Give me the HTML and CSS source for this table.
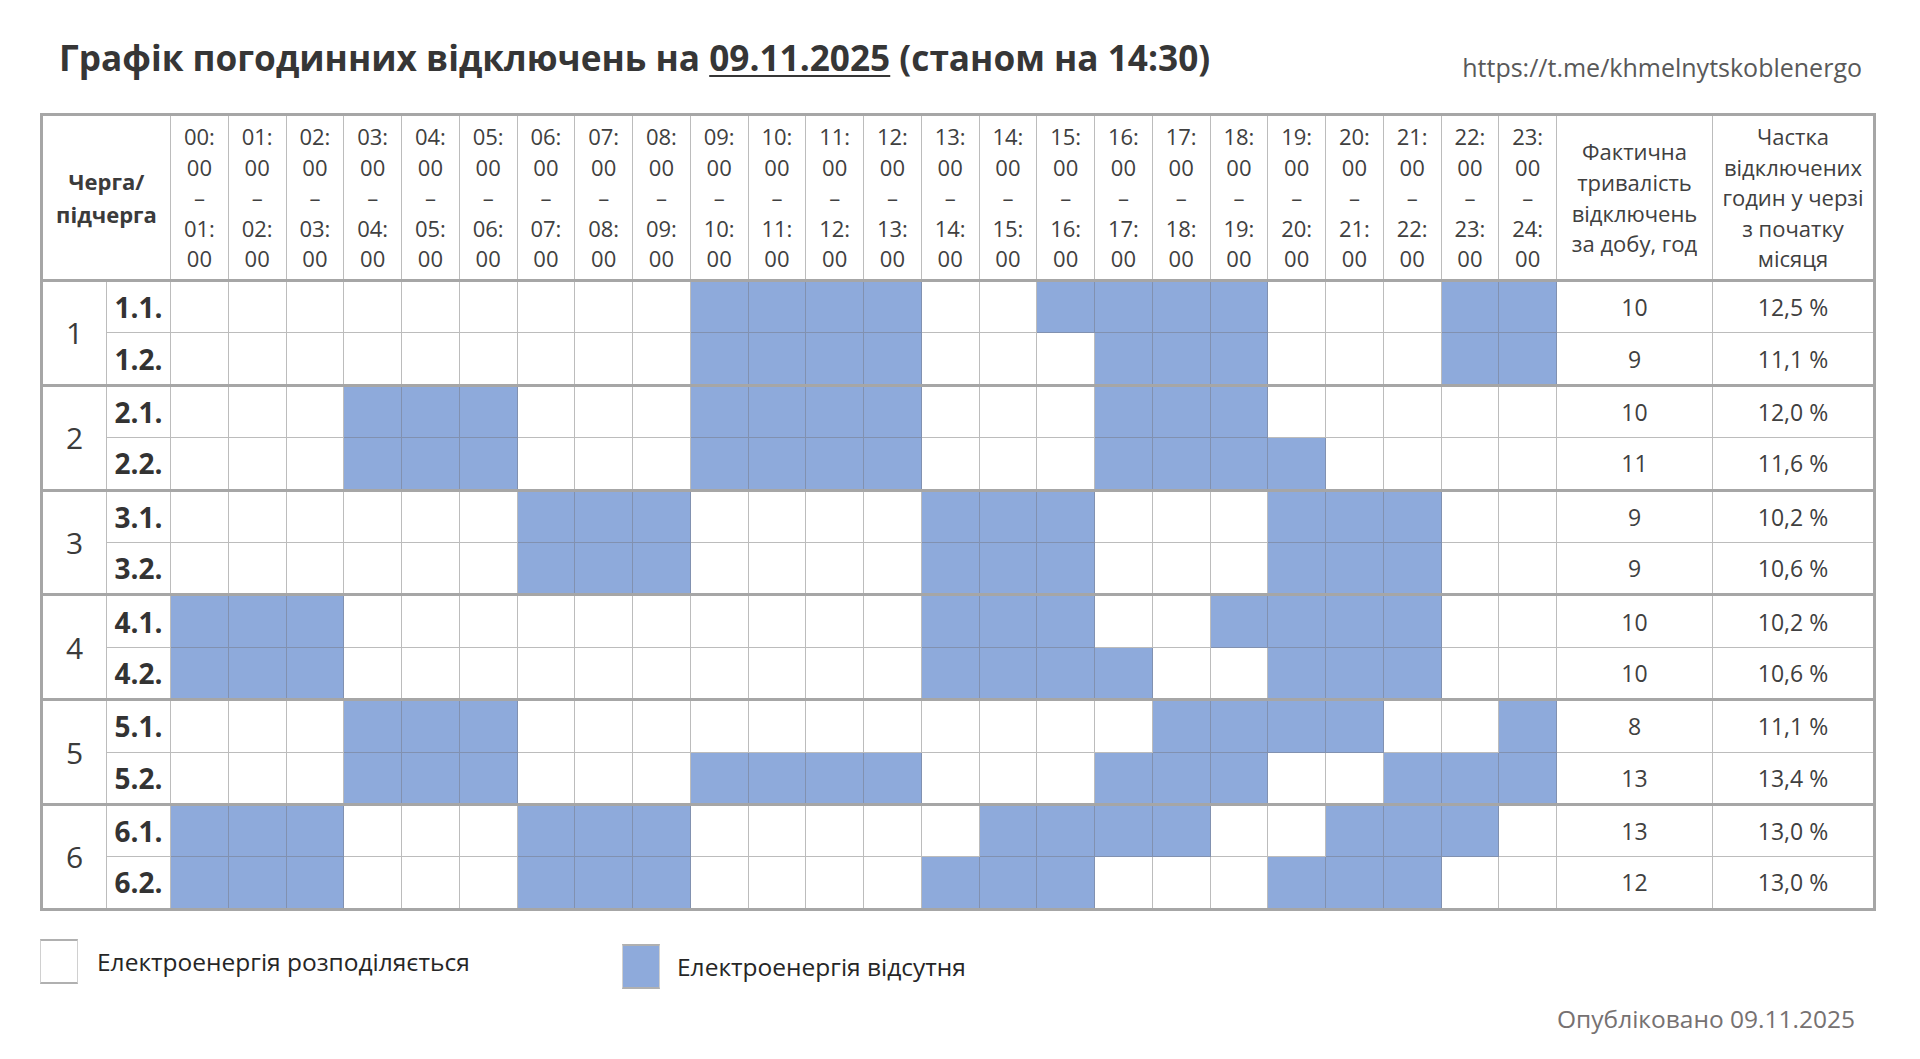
FILE: index.html
```html
<!DOCTYPE html>
<html>
<head>
    <meta charset="UTF-8">
    <title>Графік погодинних відключень</title>
    <link rel="stylesheet" href="styles.css">
</head>
<body>
    <div class="page">
        <div class="top">
            <h1 class="title">Графік погодинних відключень на <u>09.11.2025</u> (станом на 14:30)</h1>
            <div class="link">https://t.me/khmelnytskoblenergo</div>
        </div>

        <table class="schedule">
            <colgroup>
                <col class="c-group">
                <col class="c-sub">
            </colgroup>
            <thead>
                <tr id="headRow">
                    <th colspan="2" class="queue-head">Черга/<br>підчерга</th>
                </tr>
            </thead>
            <tbody id="scheduleBody"></tbody>
        </table>

        <div class="legend">
            <div class="legend-item">
                <span class="legend-box"></span>
                <span>Електроенергія розподіляється</span>
            </div>
            <div class="legend-item second">
                <span class="legend-box off"></span>
                <span>Електроенергія відсутня</span>
            </div>
        </div>

        <div class="published">Опубліковано 09.11.2025</div>
    </div>

    <script>
        // черга, підчерга, години без світла, тривалість, частка
        const rows = [
            ['1', '1.1.', [9, 10, 11, 12, 15, 16, 17, 18, 22, 23], '10', '12,5 %'],
            ['1', '1.2.', [9, 10, 11, 12, 16, 17, 18, 22, 23], '9', '11,1 %'],
            ['2', '2.1.', [3, 4, 5, 9, 10, 11, 12, 16, 17, 18], '10', '12,0 %'],
            ['2', '2.2.', [3, 4, 5, 9, 10, 11, 12, 16, 17, 18, 19], '11', '11,6 %'],
            ['3', '3.1.', [6, 7, 8, 13, 14, 15, 19, 20, 21], '9', '10,2 %'],
            ['3', '3.2.', [6, 7, 8, 13, 14, 15, 19, 20, 21], '9', '10,6 %'],
            ['4', '4.1.', [0, 1, 2, 13, 14, 15, 18, 19, 20, 21], '10', '10,2 %'],
            ['4', '4.2.', [0, 1, 2, 13, 14, 15, 16, 19, 20, 21], '10', '10,6 %'],
            ['5', '5.1.', [3, 4, 5, 17, 18, 19, 20, 23], '8', '11,1 %'],
            ['5', '5.2.', [3, 4, 5, 9, 10, 11, 12, 16, 17, 18, 21, 22, 23], '13', '13,4 %'],
            ['6', '6.1.', [0, 1, 2, 6, 7, 8, 14, 15, 16, 17, 20, 21, 22], '13', '13,0 %'],
            ['6', '6.2.', [0, 1, 2, 6, 7, 8, 13, 14, 15, 19, 20, 21], '12', '13,0 %']
        ];

        function pad(n) {
            return n.toString().padStart(2, '0');
        }

        function buildHead() {
            const colgroup = document.querySelector('.schedule colgroup');
            const head = document.getElementById('headRow');

            for (let h = 0; h < 24; h++) {
                const col = document.createElement('col');
                col.className = 'c-hour';
                colgroup.appendChild(col);

                const th = document.createElement('th');
                th.className = 'hour-head';
                th.innerHTML = `${pad(h)}:<br>00<br>–<br>${pad(h + 1)}:<br>00`;
                head.appendChild(th);
            }

            const colHours = document.createElement('col');
            colHours.className = 'c-total';
            colgroup.appendChild(colHours);
            const colShare = document.createElement('col');
            colShare.className = 'c-share';
            colgroup.appendChild(colShare);

            const thHours = document.createElement('th');
            thHours.className = 'text-head';
            thHours.innerHTML = 'Фактична<br>тривалість<br>відключень<br>за добу, год';
            head.appendChild(thHours);

            const thShare = document.createElement('th');
            thShare.className = 'text-head';
            thShare.innerHTML = 'Частка<br>відключених<br>годин у черзі<br>з початку<br>місяця';
            head.appendChild(thShare);
        }

        function buildBody() {
            const body = document.getElementById('scheduleBody');

            rows.forEach((row, i) => {
                const [group, sub, off, total, share] = row;
                const tr = document.createElement('tr');
                if (i % 2 === 0) tr.className = 'group-start';

                if (i % 2 === 0) {
                    const td = document.createElement('td');
                    td.rowSpan = 2;
                    td.className = 'group';
                    td.textContent = group;
                    tr.appendChild(td);
                }

                const subTd = document.createElement('td');
                subTd.className = 'sub';
                subTd.textContent = sub;
                tr.appendChild(subTd);

                for (let h = 0; h < 24; h++) {
                    const td = document.createElement('td');
                    td.className = off.includes(h) ? 'hour off' : 'hour';
                    tr.appendChild(td);
                }

                const totalTd = document.createElement('td');
                totalTd.className = 'value';
                totalTd.textContent = total;
                tr.appendChild(totalTd);

                const shareTd = document.createElement('td');
                shareTd.className = 'value';
                shareTd.textContent = share;
                tr.appendChild(shareTd);

                body.appendChild(tr);
            });
        }

        buildHead();
        buildBody();
    </script>
</body>
</html>
```

FILE: styles.css
```css
body {
    margin: 0;
    font-family: "Open Sans", "Noto Sans", sans-serif;
    color: #3b3b3b;
    background-color: white;
}
.page {
    padding: 34px 47px 0 40px;
}
.top {
    display: flex;
    justify-content: space-between;
    align-items: flex-end;
    margin-left: 19px;
    margin-right: 11px;
    height: 79px;
}
.title {
    margin: 0 0 33px 0;
    font-size: 35.2px;
    font-weight: bold;
    line-height: 46px;
    color: #363636;
}
.title u {
    text-decoration-thickness: 2px;
    text-underline-offset: 4px;
}
.link {
    margin-bottom: 29px;
    font-size: 25px;
    line-height: 34px;
    color: #595959;
}
.schedule {
    width: 1833px;
    table-layout: fixed;
    border-collapse: collapse;
    border: 3px solid #a6a6a6;
}
.c-group {
    width: 65px;
}
.c-sub {
    width: 64px;
}
.c-hour {
    width: 57.75px;
}
.c-total {
    width: 156px;
}
.c-share {
    width: 162px;
}
.schedule th,
.schedule td {
    border: 1px solid #bcbcbc;
    padding: 0;
    text-align: center;
    vertical-align: middle;
}
.schedule thead tr {
    height: 166px;
}
.schedule thead th {
    border-bottom: 3px solid #a6a6a6;
    font-size: 22px;
    font-weight: normal;
    line-height: 30.6px;
    color: #404040;
}
.schedule th.queue-head {
    font-weight: bold;
    line-height: 33px;
    color: #3b3b3b;
}
.schedule tbody tr {
    height: 52.4px;
}
.schedule tr.group-start td {
    border-top: 3px solid #a6a6a6;
}
.group {
    font-size: 30px;
    color: #3b3b3b;
}
.sub {
    font-size: 28px;
    font-weight: bold;
    color: #333;
}
.schedule td.off {
    background-color: #8eaadb;
    border-left-color: #8191b0;
    border-right-color: #8191b0;
    border-bottom-color: #8191b0;
}
.value {
    font-size: 23px;
    color: #404040;
}
.legend {
    display: flex;
    align-items: flex-start;
    margin-top: 28px;
}
.legend-item {
    display: flex;
    align-items: center;
    gap: 19px;
    font-size: 24.5px;
    color: #262626;
    width: 582px;
}
.legend-item.second {
    margin-top: 5px;
    gap: 17px;
}
.legend-box {
    width: 36px;
    height: 41px;
    border: 1px solid #d0d0d0;
    border-top: 2px solid #b0b0b0;
    border-bottom: 2px solid #b0b0b0;
    background-color: white;
}
.legend-box.off {
    background-color: #8eaadb;
}
.published {
    text-align: right;
    margin-top: 13px;
    margin-right: 18px;
    font-size: 24.5px;
    color: #767171;
}
```
